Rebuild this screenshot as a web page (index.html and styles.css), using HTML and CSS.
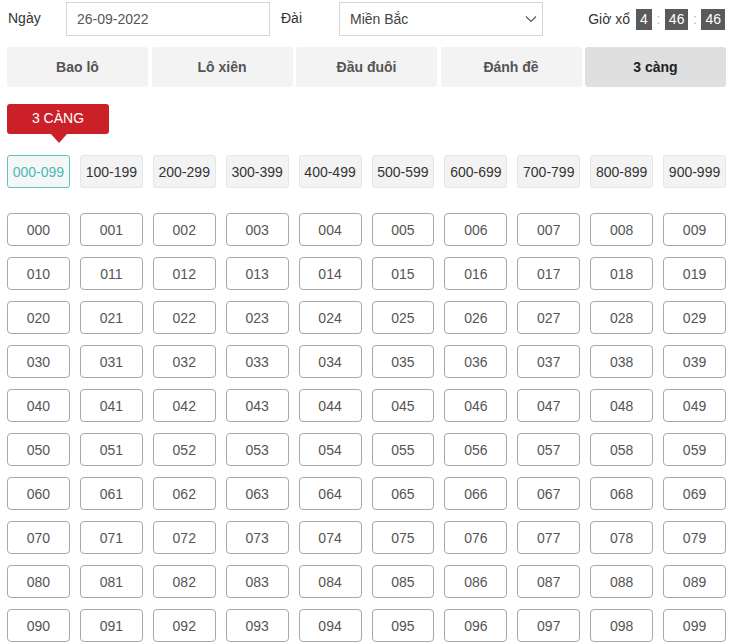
FILE: index.html
```html
<!DOCTYPE html>
<html lang="vi">
<head>
<meta charset="utf-8">
<link rel="stylesheet" href="styles.css">
</head>
<body>
<div class="page">
  <div class="toprow">
    <span class="lbl lbl-date">Ngày</span>
    <div class="field">26-09-2022</div>
    <span class="lbl lbl-dai">Đài</span>
    <div class="field select">
      <span>Miền Bắc</span>
      <svg class="chev" width="12" height="8" viewBox="0 0 12 8"><path d="M1 1.5 L6 6.5 L11 1.5" fill="none" stroke="#555" stroke-width="1.1"/></svg>
    </div>
    <div class="timer">
      <span class="tlabel">Giờ xổ</span>
      <span class="tbox">4</span><span class="colon">:</span><span class="tbox">46</span><span class="colon">:</span><span class="tbox">46</span>
    </div>
  </div>

  <div class="tabs">
    <div class="tab">Bao lô</div>
    <div class="tab">Lô xiên</div>
    <div class="tab">Đầu đuôi</div>
    <div class="tab">Đánh đề</div>
    <div class="tab active">3 càng</div>
  </div>

  <div class="badge-wrap"><div class="badge">3 CÀNG</div></div>

  <div class="ranges">
    <div class="range active">000-099</div>
    <div class="range">100-199</div>
    <div class="range">200-299</div>
    <div class="range">300-399</div>
    <div class="range">400-499</div>
    <div class="range">500-599</div>
    <div class="range">600-699</div>
    <div class="range">700-799</div>
    <div class="range">800-899</div>
    <div class="range">900-999</div>
  </div>

  <div class="grid" id="grid"></div>
</div>
<script>
  var g = document.getElementById('grid');
  var h = '';
  for (var i = 0; i < 100; i++) {
    var s = ('00' + i).slice(-3);
    h += '<div class="num">' + s + '</div>';
  }
  g.innerHTML = h;
</script>
</body>
</html>
```

FILE: styles.css
```css
* { box-sizing: border-box; }
html, body { margin: 0; padding: 0; background: #fff; }
body {
  font-family: "Liberation Sans", Arial, sans-serif;
  font-size: 14px;
  color: #333;
}
.page {
  width: 731px;
  padding: 2px 5px 0 7px;
}
.toprow {
  display: flex;
  align-items: center;
  height: 34px;
}
.lbl { color: #333; font-size: 14px; position: relative; top: -1px; }
.lbl-date { width: 59px; padding-left: 1px; }
.lbl-dai { width: 58px; margin-left: 11px; }
.field {
  width: 204px;
  height: 34px;
  border: 1px solid #d6d6d6;
  padding: 0 10px;
  display: flex;
  align-items: center;
  color: #555;
  font-size: 14px;
}
.select { justify-content: space-between; padding-right: 5px; color: #444; }
.chev { display: block; }
.timer {
  margin-left: auto;
  display: flex;
  align-items: center;
  padding-right: 1px;
}
.tlabel { color: #333; margin-right: 6px; }
.tbox {
  background: #5a5a5a;
  color: #fff;
  height: 21px;
  line-height: 21px;
  padding: 0 4px;
  font-size: 14px;
}
.colon { color: #bbb; width: 13px; text-align: center; }
.tabs {
  display: flex;
  gap: 3.5px;
  margin-top: 11px;
}
.tab {
  flex: 1;
  height: 40px;
  background: #f3f3f3;
  color: #555;
  font-weight: bold;
  font-size: 14px;
  display: flex;
  align-items: center;
  justify-content: center;
  border-radius: 3px;
}
.tab.active { background: #dfdfdf; color: #222; }
.badge-wrap { margin-top: 17px; height: 40px; }
.badge {
  position: relative;
  width: 102px;
  height: 30px;
  background: #cb2027;
  color: #fff;
  font-size: 14px;
  border-radius: 3px;
  display: flex;
  align-items: center;
  justify-content: center;
  padding-bottom: 2px;
}
.badge::after {
  content: "";
  position: absolute;
  left: 44px;
  bottom: -9px;
  border-left: 8px solid transparent;
  border-right: 8px solid transparent;
  border-top: 9px solid #cb2027;
}
.ranges {
  display: grid;
  grid-template-columns: repeat(10, 1fr);
  column-gap: 10px;
  margin-top: 11px;
  width: 719px;
}
.range {
  height: 33px;
  background: #f3f3f3;
  border: 1px solid #e6e6e6;
  border-radius: 3px;
  display: flex;
  align-items: center;
  justify-content: center;
  color: #333;
  font-size: 14px;
}
.range.active {
  border-color: #5ec3c3;
  color: #4bb9b9;
  background: #f5f7f7;
}
.grid {
  display: grid;
  grid-template-columns: repeat(10, 1fr);
  column-gap: 10px;
  row-gap: 11px;
  margin-top: 25px;
  width: 719px;
}
.num {
  height: 33px;
  border: 1px solid #a8a8a8;
  border-radius: 4px;
  background: #fff;
  display: flex;
  align-items: center;
  justify-content: center;
  color: #555;
  font-size: 14px;
}
```
